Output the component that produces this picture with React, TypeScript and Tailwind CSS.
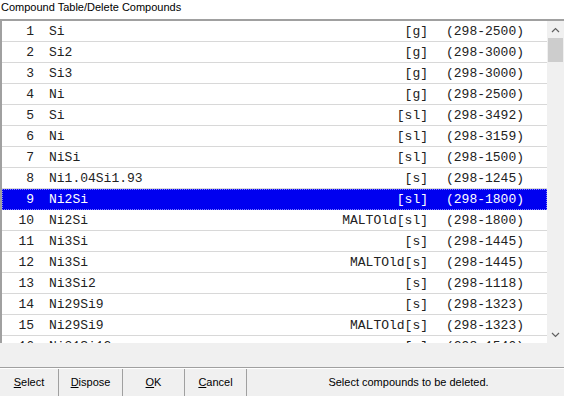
import React from "react";

const rows: [number, string, string, string][] = [
  [1, "Si", "[g]", "(298-2500)"],
  [2, "Si2", "[g]", "(298-3000)"],
  [3, "Si3", "[g]", "(298-3000)"],
  [4, "Ni", "[g]", "(298-2500)"],
  [5, "Si", "[sl]", "(298-3492)"],
  [6, "Ni", "[sl]", "(298-3159)"],
  [7, "NiSi", "[sl]", "(298-1500)"],
  [8, "Ni1.04Si1.93", "[s]", "(298-1245)"],
  [9, "Ni2Si", "[sl]", "(298-1800)"],
  [10, "Ni2Si", "MALTOld[sl]", "(298-1800)"],
  [11, "Ni3Si", "[s]", "(298-1445)"],
  [12, "Ni3Si", "MALTOld[s]", "(298-1445)"],
  [13, "Ni3Si2", "[s]", "(298-1118)"],
  [14, "Ni29Si9", "[s]", "(298-1323)"],
  [15, "Ni29Si9", "MALTOld[s]", "(298-1323)"],
  [16, "Ni31Si12", "[s]", "(298-1540)"],
];

const ui = { fontFamily: '"Liberation Sans", Arial, sans-serif' };
const mono = { fontFamily: '"Liberation Mono", "Courier New", monospace' };

function Btn({ u, rest, w }: { u: string; rest: string; w: string }) {
  return (
    <div className={`${w} h-full flex items-center justify-center border-r border-[#a0a0a0] text-[11px] text-black`} style={ui}>
      <span className="underline">{u}</span>
      <span>{rest}</span>
    </div>
  );
}

export default function App() {
  return (
    <div className="w-[564px] h-[396px] bg-white flex flex-col overflow-hidden">
      <div className="h-[19px] flex items-start pl-[1px] text-[11px] leading-[14px] text-black" style={ui}>
        Compound Table/Delete Compounds
      </div>
      <div className="h-[324px] flex border-t-2 border-l-2 border-[#a0a0a0] bg-white">
        <div className="flex-1 overflow-hidden">
          {rows.map(([n, name, phase, range]) => {
            const sel = n === 9;
            return (
              <div
                key={n}
                className={`h-[21px] flex items-center pt-[1px] text-[13px] ${
                  sel
                    ? "bg-[#0000f0] text-white outline-1 outline-dotted outline-[#8080ff] -outline-offset-1"
                    : "text-[#222] border-b border-[#d8d8d8]"
                }`}
                style={mono}
              >
                <span className="w-[32px] text-right">{n}</span>
                <span className="w-[15px]" />
                <span className="flex-1">{name}</span>
                <span className="text-right">{phase}</span>
                <span className="w-[18px]" />
                <span className="w-[101px]">{range}</span>
              </div>
            );
          })}
        </div>
        <div className="w-[17px] bg-[#f0f0f0] flex flex-col">
          <div className="h-[17px] flex items-center justify-center">
            <svg width="9" height="6" viewBox="0 0 9 6">
              <path d="M1 5 L4.5 1.5 L8 5" fill="none" stroke="#606060" strokeWidth="1.2" />
            </svg>
          </div>
          <div className="h-[24px] mx-[1px] bg-[#cdcdcd]" />
          <div className="flex-1" />
          <div className="h-[17px] flex items-center justify-center">
            <svg width="9" height="6" viewBox="0 0 9 6">
              <path d="M1 1 L4.5 4.5 L8 1" fill="none" stroke="#606060" strokeWidth="1.2" />
            </svg>
          </div>
        </div>
      </div>
      <div className="h-[25px] bg-[#f0f0f0] border-b border-[#a0a0a0]" />
      <div className="flex-1 bg-[#f0f0f0] flex items-stretch border-t border-white">
        <Btn u="S" rest="elect" w="w-[59px]" />
        <Btn u="D" rest="ispose" w="w-[64px]" />
        <Btn u="O" rest="K" w="w-[62px]" />
        <Btn u="C" rest="ancel" w="w-[62px]" />
        <div className="flex-1 flex items-center justify-center text-[11px] text-black pl-[6px]" style={ui}>
          Select compounds to be deleted.
        </div>
      </div>
    </div>
  );
}
